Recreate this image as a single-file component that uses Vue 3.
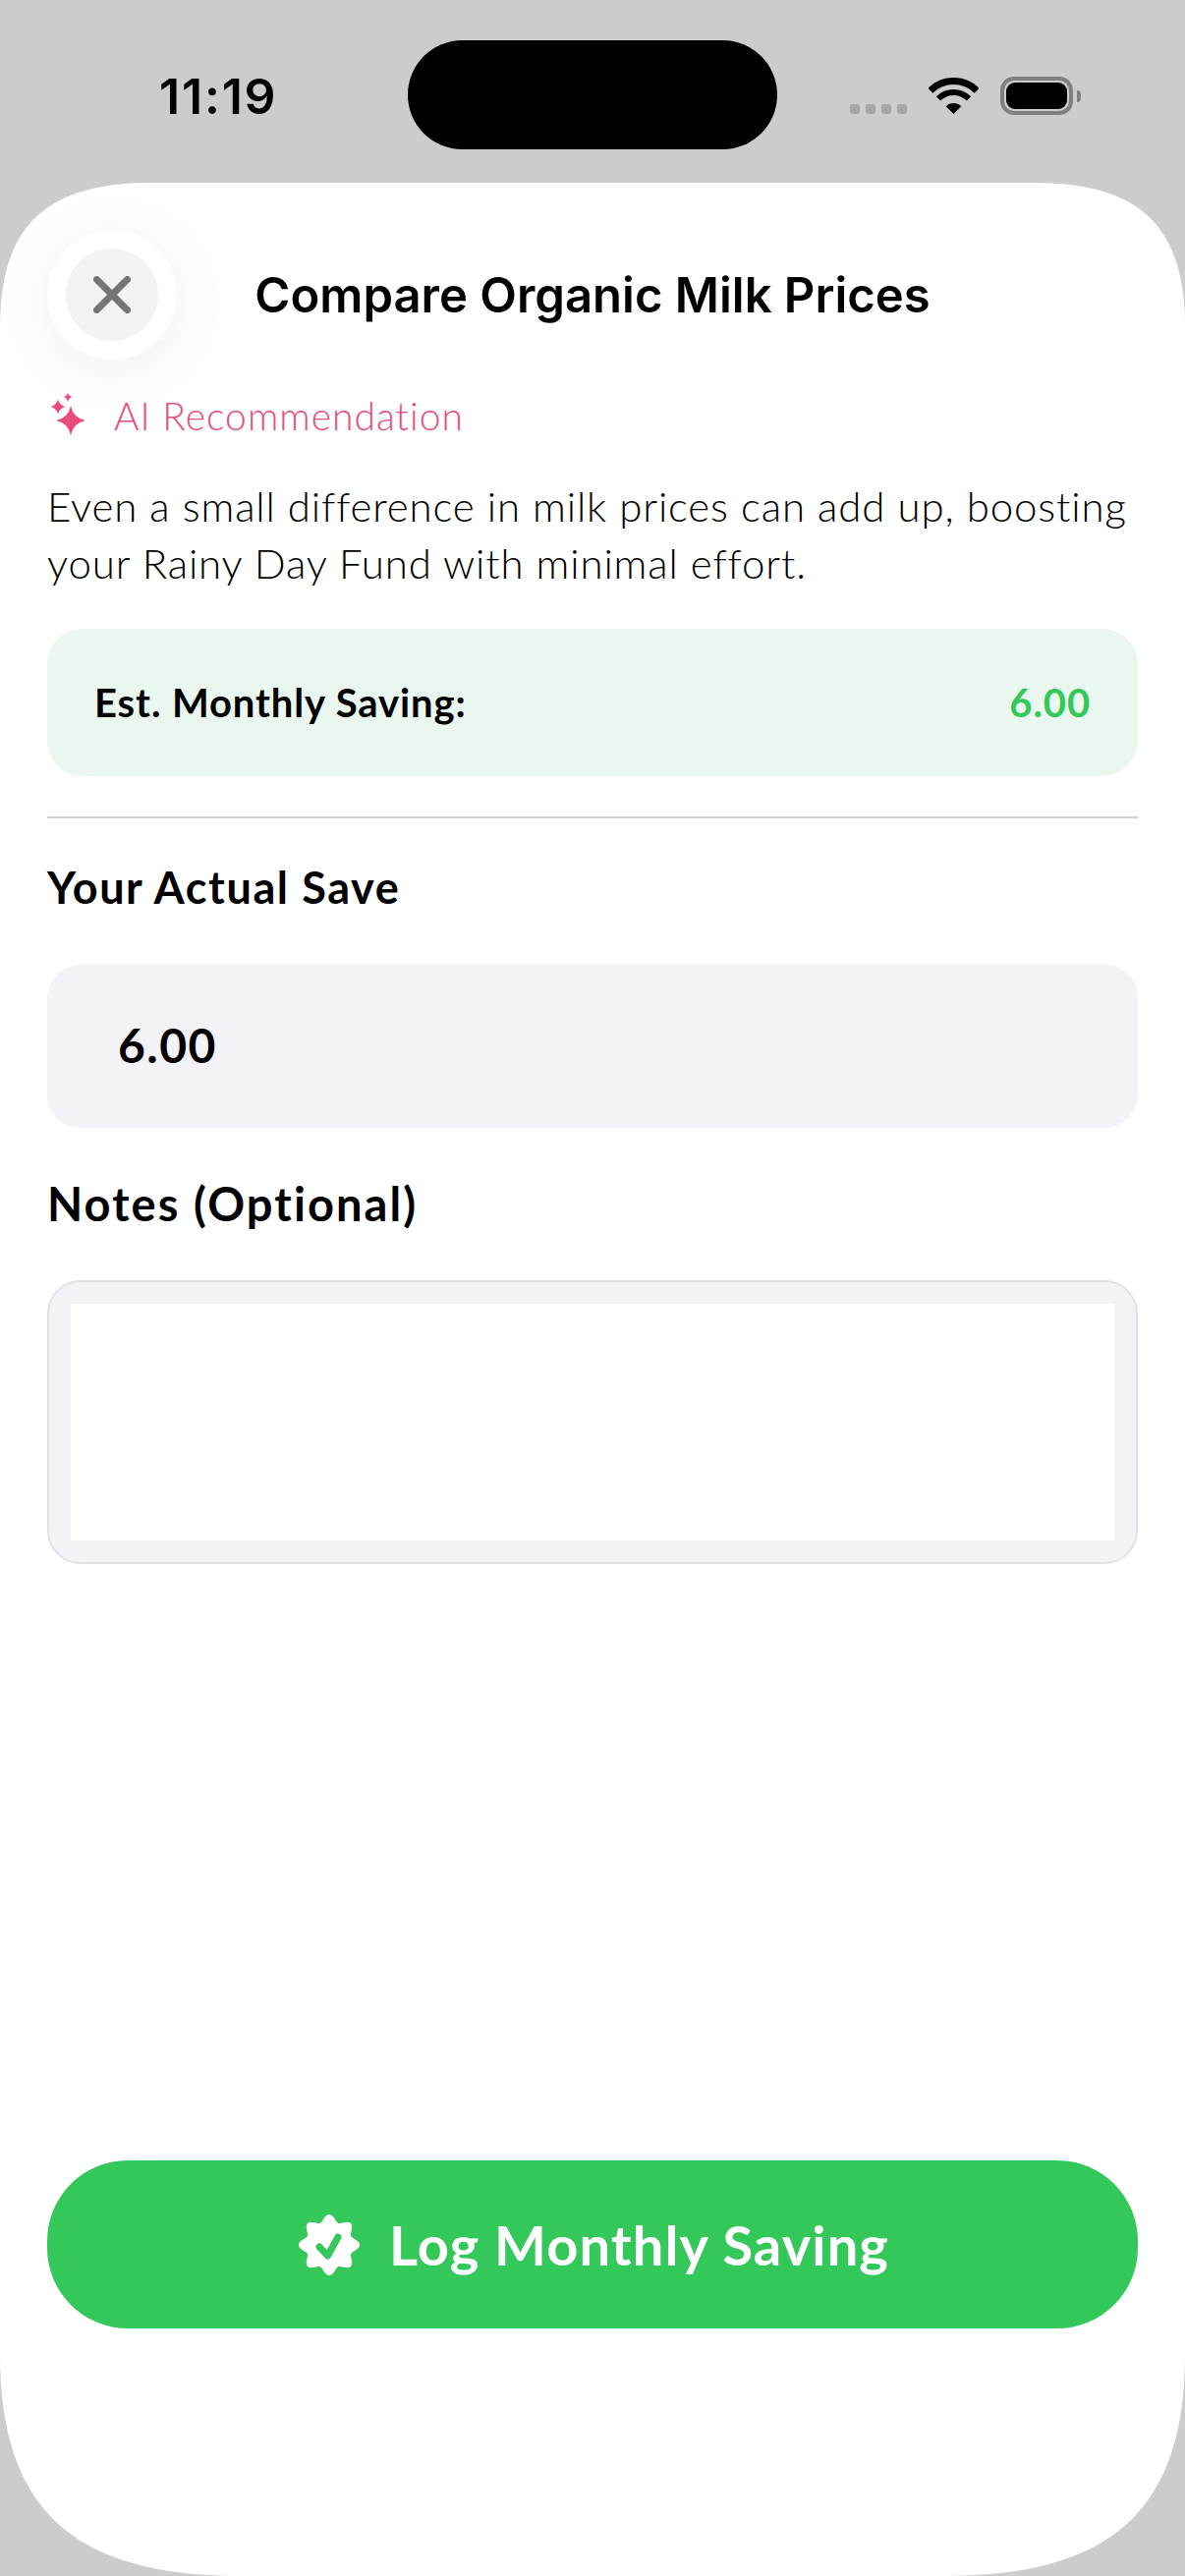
<template>
  <div class="screen">
    <div class="status-bar">
      <span class="time">11:19</span>
      <div class="island"></div>
      <div class="status-icons">
        <div class="signal">
          <span v-for="n in 4" :key="n" class="signal-dot"></span>
        </div>
        <svg class="wifi" width="51" height="37" viewBox="0 0 51 37">
          <path d="M1.8 13.3A33.5 33.5 0 0 1 49.2 13.3" fill="none" stroke="#000" stroke-width="7" />
          <path d="M9.9 21.4A22 22 0 0 1 41.1 21.4" fill="none" stroke="#000" stroke-width="6" />
          <path d="M25.5 37L17.7 29.2A11 11 0 0 1 33.3 29.2Z" fill="#000" />
        </svg>
        <div class="battery"><div class="battery-fill"></div></div>
        <div class="battery-nub"></div>
      </div>
    </div>

    <div class="sheet">
      <div class="sheet-header">
        <button class="close-btn">
          <span class="close-inner">
            <svg width="38" height="38" viewBox="0 0 38 38">
              <path d="M3.5 3.5L34.5 34.5M34.5 3.5L3.5 34.5" stroke="#757575" stroke-width="7" stroke-linecap="round" />
            </svg>
          </span>
        </button>
        <h1 class="title">Compare Organic Milk Prices</h1>
      </div>

      <div class="ai-row">
        <svg width="40" height="46" viewBox="0 0 40 46">
          <path d="M22 13Q24.5 25.500 37 28Q24.500 30.500 22 43Q19.500 30.500 7 28Q19.500 25.500 22 13Z" fill="#e94c7b" />
          <path d="M9 6.500Q10.500 12.500 16.500 14Q10.500 15.500 9 21.500Q7.500 15.500 1.500 14Q7.500 12.500 9 6.500Z" fill="#e94c7b" />
          <path d="M19 0Q19.900 3.100 23.500 4Q19.900 4.900 19 9Q18.100 4.900 14.500 4Q18.100 3.100 19 0Z" fill="#e94c7b" />
        </svg>
        <span class="ai-label">AI Recommendation</span>
      </div>

      <p class="description">
        Even a small difference in milk prices can add up, boosting<br />your Rainy Day Fund with minimal effort.
      </p>

      <div class="estimate">
        <span class="estimate-label">Est. Monthly Saving:</span>
        <span class="estimate-value">6.00</span>
      </div>

      <div class="divider"></div>

      <h2 class="section-label actual-label">Your Actual Save</h2>
      <div class="amount-field">6.00</div>

      <h2 class="section-label notes-label">Notes (Optional)</h2>
      <div class="notes-field"><div class="notes-inner"></div></div>

      <button class="log-btn">
        <svg width="62" height="62" viewBox="0 0 62 62">
          <path :d="badgePath" fill="#fff" />
          <path d="M21 33L29.500 42L40 23" fill="none" stroke="#34c759" stroke-width="7" stroke-linecap="round" stroke-linejoin="round" />
        </svg>
        <span>Log Monthly Saving</span>
      </button>
    </div>
  </div>
</template>

<script setup>
// scalloped badge outline, 8 bumps round the centre of the 62px box
const points = []
for (let i = 0; i < 160; i++) {
  const angle = (i / 160) * Math.PI * 2
  const r = 27.5 + 3.5 * Math.cos(angle * 8)
  points.push(`${(31 + r * Math.sin(angle)).toFixed(2)} ${(31 - r * Math.cos(angle)).toFixed(2)}`)
}
const badgePath = `M${points.join('L')}Z`
</script>

<style>
html,
body {
  margin: 0;
  background: #ccc;
}
</style>

<style scoped>
.screen {
  width: 1206px;
  height: 2622px;
  display: flex;
  flex-direction: column;
  background: #ccc;
  overflow: hidden;
  font-family: Lato, "Liberation Sans", sans-serif;
  color: #000;
}

.status-bar {
  height: 186px;
  flex-shrink: 0;
  display: grid;
  grid-template-columns: 415px 376px 1fr;
}

.time {
  justify-self: start;
  margin: 68px 0 0 162px;
  font-family: Inter, sans-serif;
  font-size: 50px;
  font-weight: 600;
  line-height: 60px;
  letter-spacing: 1.8px;
}

.island {
  margin-top: 41px;
  height: 111px;
  background: #000;
  border-radius: 56px;
}

.status-icons {
  display: flex;
  align-items: flex-start;
  padding: 78px 0 0 74px;
}

.signal {
  display: flex;
  gap: 6px;
  margin-top: 28px;
}

.signal-dot {
  width: 10px;
  height: 10px;
  border-radius: 3px;
  background: #a6a6a6;
}

.wifi {
  margin: 1px 0 0 22px;
}

.battery {
  width: 74px;
  height: 39px;
  box-sizing: border-box;
  margin-left: 22px;
  padding: 2px;
  border: 4px solid #808080;
  border-radius: 14px;
}

.battery-fill {
  height: 100%;
  background: #000;
  border-radius: 9px;
}

.battery-nub {
  width: 4px;
  height: 12px;
  margin: 14px 0 0 4px;
  background: #808080;
  border-radius: 0 6px 6px 0;
}

.sheet {
  flex: 1;
  display: flex;
  flex-direction: column;
  padding: 48px 48px 252px;
  background: #fff;
  clip-path: path('M0 147C0 45 45 0 154 0H1052C1161 0 1206 45 1206 147V2210C1206 2370 1130 2436 960 2436H246C76 2436 0 2370 0 2210Z');
}

.sheet-header {
  display: grid;
  grid-template-columns: 132px 1fr 132px;
  align-items: center;
  height: 132px;
}

.close-btn {
  width: 132px;
  height: 132px;
  padding: 19px;
  border: 0;
  border-radius: 50%;
  background: #fff;
  box-shadow: 0 8px 60px rgba(0, 0, 0, 0.07);
}

.close-inner {
  width: 94px;
  height: 94px;
  display: flex;
  align-items: center;
  justify-content: center;
  border-radius: 50%;
  background: #f3f3f3;
}

.title {
  margin: 2px 0 0;
  text-align: center;
  font-family: Inter, sans-serif;
  font-size: 49px;
  font-weight: 600;
  line-height: 60px;
}

.ai-row {
  display: flex;
  align-items: center;
  height: 46px;
  margin-top: 34px;
  margin-left: 2px;
  gap: 26px;
}

.ai-label {
  color: #e94c7b;
  font-size: 39px;
  font-weight: 300;
  letter-spacing: 1px;
  line-height: 46px;
}

.description {
  margin: 40px 0 0;
  font-size: 42px;
  font-weight: 300;
  letter-spacing: 0.85px;
  line-height: 58px;
}

.estimate {
  height: 150px;
  box-sizing: border-box;
  margin-top: 38px;
  padding: 0 48px;
  display: flex;
  align-items: center;
  justify-content: space-between;
  background: #eaf7ef;
  border-radius: 36px;
  font-size: 40px;
  font-weight: 700;
  letter-spacing: 0.9px;
}

.estimate-value {
  color: #34c759;
}

.divider {
  height: 2px;
  margin-top: 41px;
  background: #d4d4d4;
}

.section-label {
  margin: 0;
  font-weight: 700;
  font-size: 45px;
  letter-spacing: 1.6px;
  line-height: 56px;
}

.actual-label {
  margin-top: 42px;
}

.amount-field {
  height: 166px;
  box-sizing: border-box;
  margin-top: 51px;
  padding: 0 0 4px 72px;
  display: flex;
  align-items: center;
  background: #f2f2f7;
  border-radius: 34px;
  font-size: 48px;
  font-weight: 700;
  letter-spacing: 1.5px;
}

.notes-label {
  margin-top: 49px;
  font-size: 47px;
  letter-spacing: 2.1px;
}

.notes-field {
  height: 289px;
  box-sizing: border-box;
  margin-top: 50px;
  padding: 22px;
  background: #f2f2f7;
  border: 2px solid #e0e0e5;
  border-radius: 34px;
}

.notes-inner {
  height: 100%;
  background: #fff;
}

.log-btn {
  height: 171px;
  margin-top: auto;
  display: flex;
  align-items: center;
  justify-content: center;
  gap: 30px;
  padding: 0 0 0 3px;
  border: 0;
  border-radius: 82px;
  background: #34c759;
  color: #fff;
  font-family: inherit;
  font-size: 56px;
  font-weight: 700;
  letter-spacing: 1.1px;
}
</style>
